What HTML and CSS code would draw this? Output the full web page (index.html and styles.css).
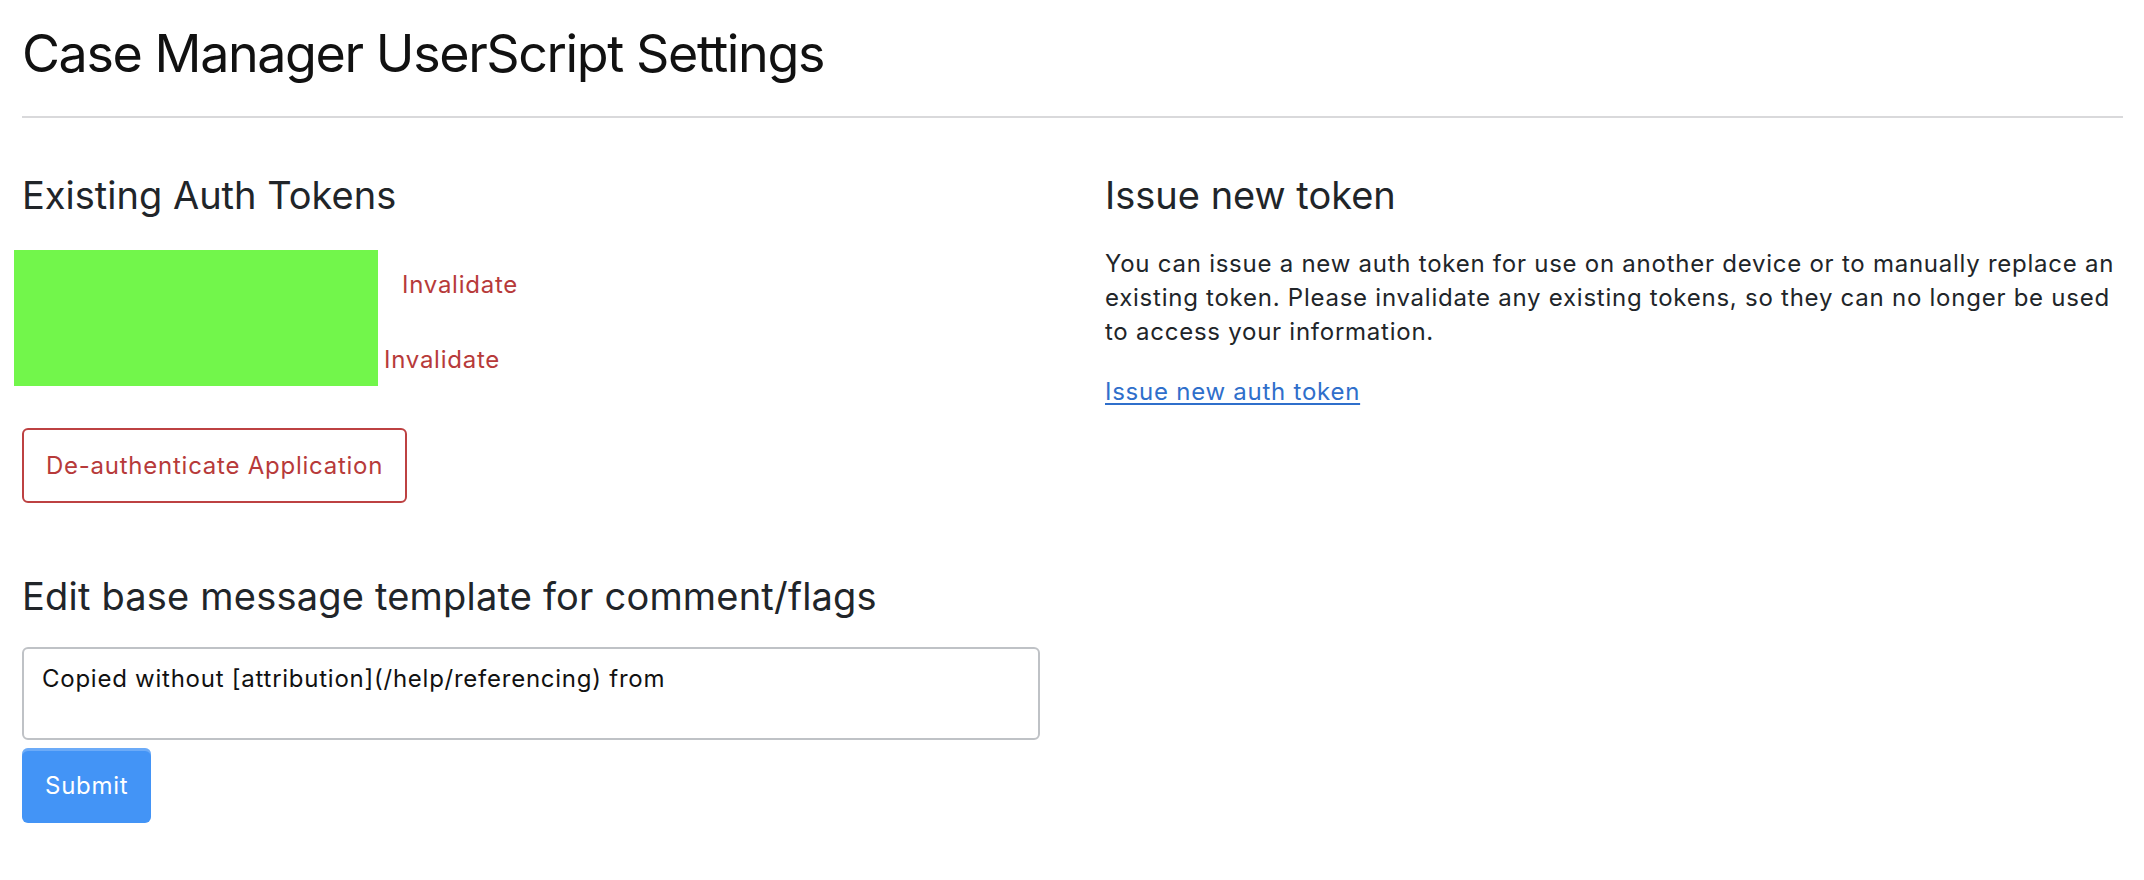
FILE: index.html
```html
<!DOCTYPE html>
<html lang="en">
<head>
<meta charset="utf-8">
<title>Case Manager UserScript Settings</title>
<link rel="stylesheet" href="styles.css">
</head>
<body>
<header class="page-header">
  <h1 class="page-title">Case Manager UserScript Settings</h1>
</header>
<hr class="divider">
<main class="columns">
  <section class="col">
    <h3 class="section-title">Existing Auth Tokens</h3>
    <div class="tokens">
      <div class="token-row"><span class="token token-a"></span><a class="invalidate" href="#">Invalidate</a></div>
      <div class="token-row"><span class="token token-b"></span><a class="invalidate" href="#">Invalidate</a></div>
      <div class="redact"></div>
    </div>
    <button class="btn btn-danger-outline" type="button">De-authenticate Application</button>
    <h3 class="section-title template-title">Edit base message template for comment/flags</h3>
    <form class="template-form">
      <textarea class="template-input">Copied without [attribution](/help/referencing) from</textarea>
      <button class="btn btn-primary" type="button">Submit</button>
    </form>
  </section>
  <section class="col">
    <h3 class="section-title">Issue new token</h3>
    <p class="info">You can issue a new auth token for use on another device or to manually replace an existing token. Please invalidate any existing tokens, so they can no longer be used to access your information.</p>
    <a class="issue-link" href="#">Issue new auth token</a>
  </section>
</main>
</body>
</html>
```

FILE: styles.css
```css
* {
  box-sizing: border-box;
}

html, body {
  margin: 0;
  background: #ffffff;
}

body {
  padding: 0 21px 0 22px;
  font-family: Inter, "Liberation Sans", sans-serif;
  font-size: 24px;
  letter-spacing: 0.75px;
  color: #212529;
}

.page-header {
  padding-top: 23px;
}

.page-title {
  margin: 0;
  font-size: 52px;
  line-height: 62px;
  font-weight: 400;
  letter-spacing: -1.4px;
  color: #111111;
}

.divider {
  margin: 31px 0 0 0;
  border: 0;
  border-top: 2px solid #d9d9db;
  height: 0;
}

.columns {
  display: grid;
  grid-template-columns: 1018px 1fr;
  column-gap: 65px;
}

.col {
  display: flex;
  flex-direction: column;
  align-items: flex-start;
}

.section-title {
  margin: 54px 0 0 0;
  font-size: 38px;
  line-height: 46px;
  font-weight: 400;
  letter-spacing: 0;
  color: #212529;
}

.tokens {
  position: relative;
  margin-top: 29px;
}

.token-row {
  display: flex;
  align-items: center;
  height: 75px;
  line-height: 75px;
  font-size: 24px;
}

.token {
  display: block;
  height: 30px;
  flex: none;
}

.token-a {
  width: 380px;
}

.token-b {
  width: 362px;
}

.invalidate {
  color: #b73a3a;
  text-decoration: none;
}

.redact {
  position: absolute;
  left: -8px;
  top: 3px;
  width: 364px;
  height: 136px;
  background: #72f64b;
}

.btn {
  font-family: Inter, "Liberation Sans", sans-serif;
  font-size: 24px;
  letter-spacing: 0.75px;
  height: 75px;
  border-radius: 6px;
  cursor: pointer;
}

.btn-danger-outline {
  margin-top: 31px;
  padding: 0 22px;
  background: #ffffff;
  color: #b73a3a;
  border: 2px solid #bd4142;
}

.template-title {
  margin-top: 70px;
  letter-spacing: 0.2px;
}

.template-form {
  display: flex;
  flex-direction: column;
  align-items: flex-start;
  gap: 8px;
  margin-top: 28px;
  width: 100%;
}

.template-input {
  width: 100%;
  height: 93px;
  padding: 13px 18px;
  border: 2px solid #bfc2c6;
  border-radius: 6px;
  font-family: Inter, "Liberation Sans", sans-serif;
  font-size: 24px;
  letter-spacing: 0.75px;
  line-height: 34px;
  color: #111111;
  resize: none;
}

.btn-primary {
  padding: 0 23px;
  background: #4394f6;
  color: #ffffff;
  border: 0;
  box-shadow: inset 0 3px 0 rgba(255, 255, 255, 0.22);
}

.info {
  margin: 29px 0 0 0;
  font-size: 24px;
  line-height: 34px;
  color: #212529;
}

.issue-link {
  margin-top: 26px;
  font-size: 24px;
  line-height: 34px;
  color: #2f6fcb;
  text-decoration: underline;
  text-underline-offset: 3px;
}
```
